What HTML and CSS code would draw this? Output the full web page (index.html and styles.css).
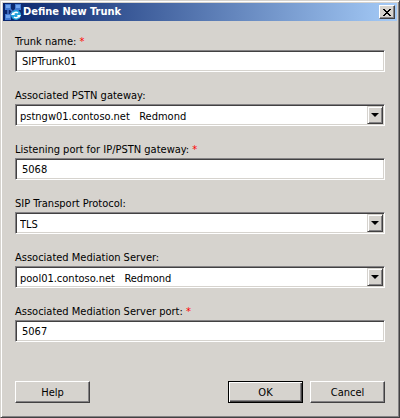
FILE: index.html
```html
<!DOCTYPE html>
<html lang="en">
<head>
<meta charset="utf-8">
<title>Define New Trunk</title>
<link rel="stylesheet" href="styles.css">
</head>
<body>
<main class="dialog">
  <header class="titlebar">
    <svg class="app-icon" viewBox="0 0 16 18" aria-hidden="true">
      <path d="M3 4l5 5 5-5M8 8l-5 6M3 5v8M13 5v6" stroke="#4f78c8" stroke-width="1.5" fill="none"/>
      <rect x="0" y="1" width="6" height="6" fill="#4179d2"/>
      <rect x="1" y="2" width="4" height="3" fill="#6fa4ee"/>
      <rect x="10" y="1" width="6" height="6" fill="#4179d2"/>
      <rect x="11" y="2" width="4" height="3" fill="#6fa4ee"/>
      <rect x="0" y="11" width="6" height="6" fill="#4179d2"/>
      <rect x="1" y="12" width="4" height="3" fill="#6fa4ee"/>
      <circle cx="11" cy="12" r="5" fill="#22a3dc"/>
      <path d="M8 12a3 3 0 0 1 5-2M14 12a3 3 0 0 1-5 2" stroke="#fff" stroke-width="1.5" fill="none"/>
      <path d="M6 12h4l-2-3zM12 12h4l-2 3z" fill="#fff"/>
    </svg>
    <h1 class="title">Define New Trunk</h1>
    <button class="close" type="button" aria-label="Close">
      <svg class="close-icon" viewBox="0 0 8 7" aria-hidden="true"><path d="M0 0h2v1h1v1h2V1h1V0h2v1H7v1H6v1H5v1h1v1h1v1h1v1H6V6H5V5H3v1H2v1H0V6h1V5h1V4h1V3H2V2H1V1H0z" fill="#000"/></svg>
    </button>
  </header>
  <form class="body">
    <div class="fields">
      <div class="field">
        <label for="name">Trunk name: <span class="required">*</span></label>
        <input class="control" id="name" type="text" value="SIPTrunk01">
      </div>
      <div class="field">
        <label for="gateway">Associated PSTN gateway:</label>
        <div class="picker">
          <select class="control" id="gateway"><option>pstngw01.contoso.net &nbsp; Redmond</option></select>
          <span class="drop"></span>
        </div>
      </div>
      <div class="field">
        <label for="listen">Listening port for IP/PSTN gateway: <span class="required">*</span></label>
        <input class="control" id="listen" type="text" value="5068">
      </div>
      <div class="field">
        <label for="protocol">SIP Transport Protocol:</label>
        <div class="picker">
          <select class="control" id="protocol"><option>TLS</option></select>
          <span class="drop"></span>
        </div>
      </div>
      <div class="field">
        <label for="server">Associated Mediation Server:</label>
        <div class="picker">
          <select class="control" id="server"><option>pool01.contoso.net &nbsp; Redmond</option></select>
          <span class="drop"></span>
        </div>
      </div>
      <div class="field">
        <label for="port">Associated Mediation Server port: <span class="required">*</span></label>
        <input class="control" id="port" type="text" value="5067">
      </div>
    </div>
    <footer class="actions">
      <button class="button help" type="button">Help</button>
      <button class="button default" type="submit">OK</button>
      <button class="button" type="button">Cancel</button>
    </footer>
  </form>
</main>
</body>
</html>
```
FILE: styles.css
```css
* { box-sizing: border-box; }

body {
  margin: 0;
  background: #d6d3ce;
  color: #000;
  font: 11px/16px Tahoma, "DejaVu Sans Condensed", "Noto Sans", sans-serif;
}

.dialog {
  display: flex;
  flex-direction: column;
  min-height: 100vh;
  padding: 1px;
  border: 1px solid;
  border-color: #d6d3ce #424142 #424142 #d6d3ce;
  box-shadow: inset 1px 1px #fff, inset -1px -1px #848284;
}

.titlebar {
  display: flex;
  align-items: center;
  height: 18px;
  margin: 1px 1px 0;
  padding: 0 2px;
  background: linear-gradient(to right, #08246b, #a5cbf7);
}

.app-icon { width: 16px; height: 18px; }

.title {
  flex: 1;
  margin: 0 0 0 2px;
  color: #fff;
  font-size: 11px;
  font-weight: bold;
  line-height: 18px;
}

.close {
  display: grid;
  place-items: center;
  width: 16px;
  height: 14px;
  padding: 0;
  border: 1px solid;
  border-color: #fff #424142 #424142 #fff;
  background: #d6d3ce;
  box-shadow: inset -1px -1px #848284;
}

.close-icon { width: 8px; height: 7px; }

.body {
  flex: 1;
  display: flex;
  flex-direction: column;
  justify-content: space-between;
  padding: 13px 13px 13px;
}

.fields { display: grid; gap: 16px; }

.field { display: grid; }

.required { color: #f00; }

.control {
  appearance: none;
  width: 100%;
  height: 22px;
  padding: 0 6px;
  border: 1px solid;
  border-color: #848284 #fff #fff #848284;
  border-radius: 0;
  outline: 0;
  background: #fff;
  box-shadow: inset 1px 1px #424142, inset -1px -1px #d6d3ce;
  color: #000;
  font: inherit;
}

.picker { position: relative; display: grid; }

.picker .control { padding: 3px 20px 0 4px; }

.drop {
  position: absolute;
  top: 2px;
  right: 2px;
  bottom: 2px;
  display: grid;
  place-items: center;
  width: 16px;
  border: 1px solid;
  border-color: #d6d3ce #424142 #424142 #d6d3ce;
  background: #d6d3ce;
  box-shadow: inset 1px 1px #fff, inset -1px -1px #848284;
  pointer-events: none;
}

.drop::before {
  content: "";
  border: solid transparent;
  border-width: 4px 4px 0;
  border-top-color: #000;
}

.actions { display: flex; gap: 7px; }

.button {
  width: 75px;
  height: 22px;
  padding: 1px 0 0;
  border: 1px solid;
  border-color: #fff #424142 #424142 #fff;
  border-radius: 0;
  background: #d6d3ce;
  box-shadow: inset -1px -1px #848284;
  color: #000;
  font: inherit;
}

.help { margin-right: auto; }

.default {
  border-color: #000;
  box-shadow: inset 1px 1px #fff, inset -1px -1px #424142, inset -2px -2px #848284;
}
```
